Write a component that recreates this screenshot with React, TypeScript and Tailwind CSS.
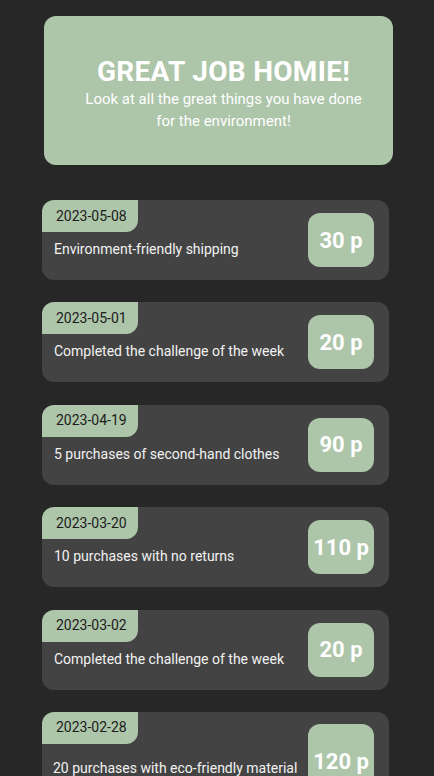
import React from "react";

const items = [
  { date: "2023-05-08", text: "Environment-friendly shipping", pts: "30 p" },
  { date: "2023-05-01", text: "Completed the challenge of the week", pts: "20 p" },
  { date: "2023-04-19", text: "5 purchases of second-hand clothes", pts: "90 p" },
  { date: "2023-03-20", text: "10 purchases with no returns", pts: "110 p" },
  { date: "2023-03-02", text: "Completed the challenge of the week", pts: "20 p" },
];

function Card({ date, text, pts }: { date: string; text: string; pts: string }) {
  return (
    <div className="flex h-[80px] w-[347px] rounded-[12px] bg-[#434343]">
      <div className="flex flex-1 flex-col">
        <div className="flex h-[32px] w-[96px] items-center rounded-tl-[12px] rounded-br-[12px] bg-[#adc5a9] pl-[14px] text-[14px] text-[#1c1c1c]">
          {date}
        </div>
        <div className="mt-[7px] pl-[12px] text-[14px] leading-[20px] text-[#f2f2f2]">{text}</div>
      </div>
      <div className="mr-[15px] flex h-[54px] w-[66px] items-center justify-center self-center rounded-[12px] bg-[#adc5a9] text-[22px] font-bold text-white">
        {pts}
      </div>
    </div>
  );
}

export default function App() {
  return (
    <div className="overflow-hidden bg-[#272727] pt-[16px] font-['Roboto',sans-serif]" style={{ height: 776 }}>
      <div className="ml-[44px] flex h-[149px] w-[349px] flex-col items-center justify-center rounded-[12px] bg-[#adc5a9] pl-[10px] pt-[6px] text-center text-white">
        <div className="text-[28px] font-bold leading-[32px] tracking-[0.3px]">GREAT JOB HOMIE!</div>
        <div className="text-[15px] leading-[22px]">
          Look at all the great things you have done
          <br />
          for the environment!
        </div>
      </div>
      <div className="ml-[42px] mt-[35px] flex flex-col gap-[22.4px]">
        {items.map((it, i) => (
          <Card key={i} {...it} />
        ))}
        <div className="flex h-[100px] w-[347px] rounded-[12px] bg-[#434343]">
          <div className="flex flex-1 flex-col">
            <div className="flex h-[32px] w-[96px] items-center rounded-tl-[12px] rounded-br-[12px] bg-[#adc5a9] pl-[14px] text-[14px] text-[#1c1c1c]">
              2023-02-28
            </div>
            <div className="mt-[14px] pl-[11px] text-[14px] leading-[20px] text-[#f2f2f2]">
              20 purchases with eco-friendly material
            </div>
          </div>
          <div className="mr-[15px] mt-[12px] flex h-[80px] w-[66px] items-start justify-center rounded-[12px] bg-[#adc5a9] pt-[26px] text-[22px] font-bold leading-[24px] text-white">
            120 p
          </div>
        </div>
      </div>
    </div>
  );
}
